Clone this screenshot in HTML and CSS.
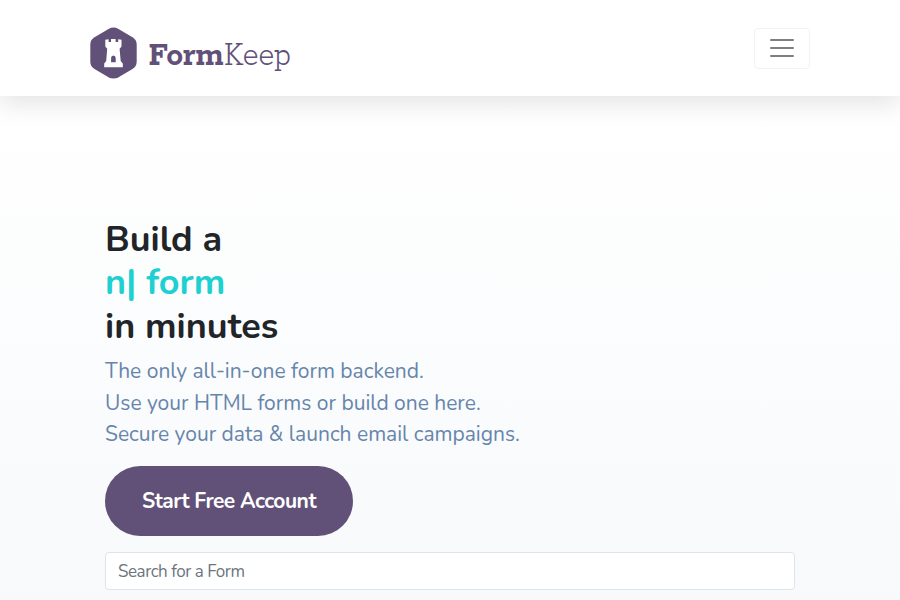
FILE: index.html
```html
<!DOCTYPE html>
<html lang="en">
<head>
<meta charset="utf-8">
<title>FormKeep</title>
<link rel="stylesheet" href="styles.css">
</head>
<body>
<header class="navbar">
  <a class="brand">
    <svg width="216" height="60" viewBox="0 0 216 60" role="img" aria-label="FormKeep">
      <path class="badge" d="M18.5 2 Q23.5 -.8 28.5 2 L42.5 10.2 Q46.7 12.8 46.7 17.5 V34.5 Q46.7 39.5 42.5 42 L28.5 50.2 Q23.5 53 18.5 50.2 L4.5 42 Q.3 39.5 .3 34.5 V17.5 Q.3 12.8 4.5 10.2 Z"/>
      <path class="tower" fill-rule="evenodd" d="M15.3 12.7 L18.6 12.2 V15 H21 V12 H25.6 V15 H28.2 V12.2 L31.5 12.7 V19.5 L29.6 21.8 L30.7 34 L32.8 36.5 V40.2 H14.2 V36.5 L16.2 34 L17.2 21.8 L15.3 19.5 Z M21.1 35.3 V31 Q21.1 28.5 23.4 28.5 Q25.7 28.5 25.7 31 V35.3 Z"/>
      <text class="word bold" x="58.5" y="38.3" textLength="75" lengthAdjust="spacingAndGlyphs">Form</text>
      <text class="word light" x="134" y="38.3" textLength="67" lengthAdjust="spacingAndGlyphs">Keep</text>
    </svg>
  </a>
  <button class="toggler" aria-label="Menu">
    <svg width="30" height="30" viewBox="0 0 30 30"><path d="M4 7h22M4 15h22M4 23h22"/></svg>
  </button>
</header>
<main class="hero">
  <h1 class="title"><span>Build a</span><span class="accent">n| form</span><span>in minutes</span></h1>
  <p class="lead"><span>The only all-in-one form backend.</span><span>Use your HTML forms or build one here.</span><span>Secure your data &amp; launch email campaigns.</span></p>
  <a class="cta">Start Free Account</a>
  <input class="search" type="text" placeholder="Search for a Form">
</main>
</body>
</html>
```
FILE: styles.css
```css
* { box-sizing: border-box; }
body {
  margin: 0;
  height: 600px;
  overflow: hidden;
  font-family: Nunito, Lato, sans-serif;
  background: linear-gradient(#fff 96px, #f7f9fb 600px);
}
.navbar {
  height: 96px;
  padding: 27px 90px 0;
  display: flex;
  justify-content: space-between;
  align-items: flex-start;
  background: #fff;
  box-shadow: 0 8px 24px rgba(0, 0, 0, .11);
}
.brand svg { display: block; }
.badge { fill: #615178; }
.tower { fill: #fff; }
.word { font-family: "Museo Slab", "Rokkitt", "Roboto Slab", "Zilla Slab", "DejaVu Serif", serif; font-size: 36px; fill: #615178; }
.bold { font-weight: 700; }
.light { font-weight: 300; }
.toggler {
  width: 56px;
  height: 41px;
  margin-top: .5px;
  padding: 0;
  display: flex;
  align-items: center;
  justify-content: center;
  background: #fff;
  border: 1px solid #f2f2f2;
  border-radius: 4px;
}
.toggler path { stroke: #7f7f7f; stroke-width: 2; stroke-linecap: round; }
.hero {
  padding: 122px 105px 0;
  display: flex;
  flex-direction: column;
  align-items: flex-start;
}
.title {
  margin: 0;
  font-size: 36px;
  line-height: 43.4px;
  font-weight: 700;
  color: #212529;
}
.title span, .lead span { display: block; }
.title .accent { color: #20d0d0; }
.lead {
  margin: 8px 0 15px;
  font-size: 21px;
  line-height: 31.5px;
  color: #6685ab;
}
.cta {
  width: 248px;
  height: 70px;
  border-radius: 35px;
  display: flex;
  align-items: center;
  justify-content: center;
  background: #615178;
  color: #fff;
  font-size: 21px;
  font-weight: 700;
  letter-spacing: -.5px;
}
.search {
  width: 100%;
  height: 38px;
  margin: 16px 0 0;
  padding: 2px 12px 0;
  border: 1px solid #dee4ec;
  border-radius: 4px;
  background: #fff;
  font: 17px Nunito, Lato, sans-serif;
  letter-spacing: -.45px;
}
.search::placeholder { color: #6c757d; opacity: 1; }
```
